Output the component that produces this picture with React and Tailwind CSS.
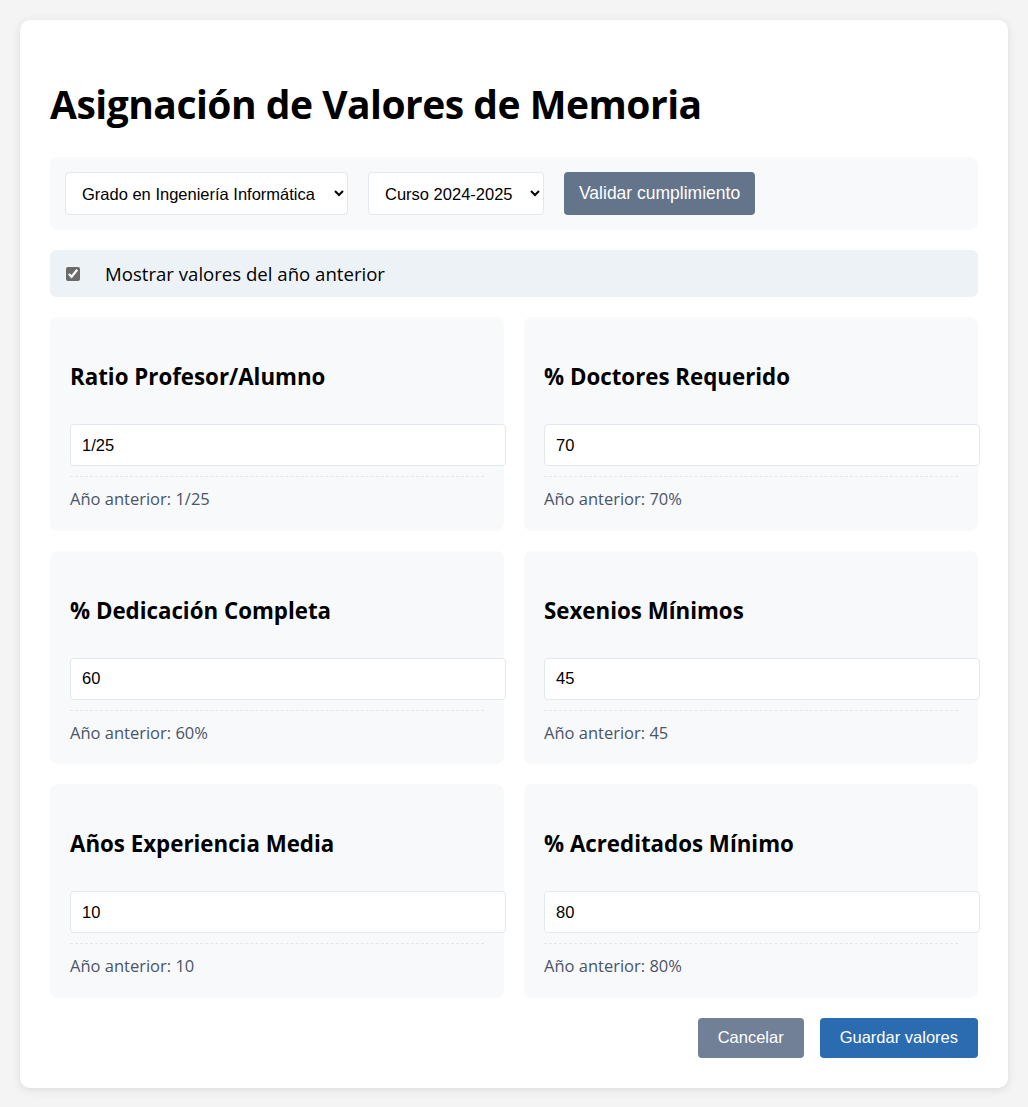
import React from "react";

const cards = [
  { title: "Ratio Profesor/Alumno", value: "1/25", prev: "1/25" },
  { title: "% Doctores Requerido", value: "70", prev: "70%" },
  { title: "% Dedicación Completa", value: "60", prev: "60%" },
  { title: "Sexenios Mínimos", value: "45", prev: "45" },
  { title: "Años Experiencia Media", value: "10", prev: "10" },
  { title: "% Acreditados Mínimo", value: "80", prev: "80%" },
];

const ui = { fontFamily: '"Open Sans", "Noto Sans", sans-serif' };
const arial = { fontFamily: '"Liberation Sans", Arial, sans-serif' };

export default function App() {
  return (
    <div className="min-h-screen bg-[#f4f4f4] p-5" style={ui}>
      <div className="bg-white rounded-[10px] shadow-[0_2px_10px_rgba(0,0,0,0.1)] p-[30px]">
        <h1 className="my-[27px] text-[39px] leading-[53px] font-bold text-black tracking-[-0.5px]">
          Asignación de Valores de Memoria
        </h1>

        <div className="bg-[#f8f9fa] rounded-lg p-[15px] flex gap-5 mb-5">
          <select
            className="w-[283px] h-[43px] pl-[12px] pr-[8px] border border-[#e2e8f0] rounded bg-white text-[16.5px] text-black"
            style={arial}
            defaultValue="gii"
          >
            <option value="gii">Grado en Ingeniería Informática</option>
          </select>
          <select
            className="w-[176px] h-[43px] pl-[12px] pr-[8px] border border-[#e2e8f0] rounded bg-white text-[16.5px] text-black"
            style={arial}
            defaultValue="c"
          >
            <option value="c">Curso 2024-2025</option>
          </select>
          <button
            className="h-[43px] px-[15px] rounded bg-[#64748b] text-white text-[17.5px]"
            style={arial}
          >
            Validar cumplimiento
          </button>
        </div>

        <div className="bg-[#edf2f7] rounded-md px-[15px] h-[47px] flex items-center mb-5">
          <input
            type="checkbox"
            defaultChecked
            className="w-[14px] h-[14px] ml-[1px] mr-[25px] accent-[#6b6b6b]"
          />
          <span className="text-[18.6px] text-black">Mostrar valores del año anterior</span>
        </div>

        <div className="grid grid-cols-2 gap-5">
          {cards.map((c) => (
            <div key={c.title} className="bg-[#f8f9fa] rounded-lg p-5">
              <h3 className="mt-[25px] mb-[32px] text-[22.3px] leading-[30px] font-bold text-black">
                {c.title}
              </h3>
              <input
                type="text"
                defaultValue={c.value}
                className="block w-[calc(100%+22px)] h-[42px] px-[11px] border border-[#e2e8f0] rounded bg-white text-[16.5px] text-black"
                style={arial}
              />
              <div className="mt-[10px] border-t border-dashed border-[#e2e8f0] pt-[10px] text-[16.5px] leading-[23.6px] text-[#4a5568]">
                Año anterior: {c.prev}
              </div>
            </div>
          ))}
        </div>

        <div className="flex justify-end gap-4 mt-5">
          <button className="h-10 px-5 rounded bg-[#718096] text-white text-[16.5px]" style={arial}>
            Cancelar
          </button>
          <button className="h-10 px-5 rounded bg-[#2b6cb0] text-white text-[16.5px]" style={arial}>
            Guardar valores
          </button>
        </div>
      </div>
    </div>
  );
}
